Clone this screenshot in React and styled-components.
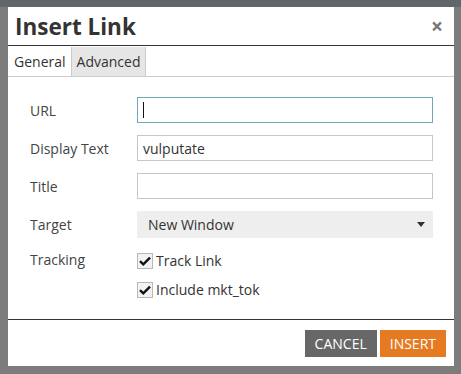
import React, { useState } from 'react';
import styled, { createGlobalStyle } from 'styled-components';

const GlobalStyle = createGlobalStyle`
  html, body {
    margin: 0;
    padding: 0;
  }
  body {
    font-family: "Open Sans", "Liberation Sans", sans-serif;
    background: linear-gradient(#5f676b 0, #5f676b 7px, #7c7c7c 7px);
    min-height: 374px;
    overflow: hidden;
  }
`;

const Backdrop = styled.div`
  padding: 7px 0 0 8px;
`;

const Dialog = styled.div`
  width: 446px;
  height: 359px;
  background: #fff;
  display: flex;
  flex-direction: column;
  box-sizing: border-box;
`;

const Header = styled.div`
  height: 39px;
  display: flex;
  align-items: center;
  justify-content: space-between;
  padding: 0 11px 0 7px;
  border-bottom: 1px solid #333;
  box-sizing: border-box;
`;

const Title = styled.h1`
  margin: 0;
  font-size: 22.5px;
  font-weight: 700;
  color: #333;
`;

const Close = styled.span`
  font-size: 21px;
  font-weight: 700;
  color: #777;
  line-height: 1;
  cursor: pointer;
`;

const TabBar = styled.div`
  display: flex;
  height: 30px;
  border-bottom: 1px solid #ccc;
  box-sizing: border-box;
  margin-top: 1px;
`;

const Tab = styled.div`
  display: flex;
  align-items: center;
  padding: ${(p) => (p.$first ? '0 5px 0 6px' : '0 5px')};
  font-size: 14px;
  color: #333;
  background: ${(p) => (p.$active ? '#fff' : '#e6e6e6')};
  border-left: ${(p) => (p.$active ? 'none' : '1px solid #ccc')};
  border-right: ${(p) => (p.$active ? 'none' : '1px solid #ccc')};
  cursor: pointer;
`;

const Body = styled.div`
  flex: 1;
  padding: 20px 21px 0 22px;
  display: flex;
  flex-direction: column;
  gap: 12px;
  border-bottom: 1px solid #333;
`;

const Row = styled.div`
  display: grid;
  grid-template-columns: 107px 1fr;
  align-items: ${(p) => (p.$top ? 'start' : 'center')};
`;

const Label = styled.label`
  font-size: 14px;
  color: #444;
`;

const Field = styled.div`
  position: relative;
`;

const TextCaret = styled.span`
  position: absolute;
  left: 6px;
  top: 5px;
  width: 1px;
  height: 16px;
  background: #111;
`;

const Input = styled.input`
  display: block;
  height: 26px;
  box-sizing: border-box;
  border: 1px solid ${(p) => (p.$focus ? '#6fa9b9' : '#c6c6c6')};
  padding: 0 5px;
  font-family: "Open Sans", "Liberation Sans", sans-serif;
  font-size: 14px;
  color: #333;
  outline: none;
  width: 100%;
`;

const Select = styled.div`
  height: 27px;
  background: #eeeeee;
  display: flex;
  align-items: center;
  justify-content: space-between;
  padding: 0 8px 0 11px;
  font-size: 14px;
  color: #333;
`;

const Caret = styled.span`
  width: 0;
  height: 0;
  border-left: 4px solid transparent;
  border-right: 4px solid transparent;
  border-top: 5px solid #333;
`;

const Checks = styled.div`
  display: flex;
  flex-direction: column;
  gap: 10px;
  padding-top: 1px;
`;

const CheckRow = styled.label`
  display: flex;
  align-items: center;
  gap: 3px;
  font-size: 14px;
  color: #333;
  cursor: pointer;
`;

const Box = styled.span`
  width: 16px;
  height: 16px;
  box-sizing: border-box;
  border: 1px solid #b8b8b8;
  background: #f2f2f2;
  display: flex;
  align-items: center;
  justify-content: center;
`;

const Footer = styled.div`
  height: 46px;
  display: flex;
  justify-content: flex-end;
  align-items: flex-start;
  gap: 3px;
  padding: 10px 8px 0 0;
  box-sizing: border-box;
`;

const Button = styled.button`
  height: 27px;
  border: none;
  padding: 0 10px;
  font-family: "Open Sans", "Liberation Sans", sans-serif;
  font-size: 14px;
  color: #fff;
  background: ${(p) => (p.$primary ? '#e67a22' : '#676767')};
  cursor: pointer;
`;

function Check({ checked, onToggle, children }) {
  return (
    <CheckRow onClick={onToggle}>
      <Box>
        {checked && (
          <svg width="12" height="10" viewBox="0 0 12 10">
            <path d="M1 5.2 L4.3 8.3 L11 1.6" fill="none" stroke="#111" strokeWidth="2.4" />
          </svg>
        )}
      </Box>
      {children}
    </CheckRow>
  );
}

export default function App() {
  const [track, setTrack] = useState(true);
  const [tok, setTok] = useState(true);
  const [url, setUrl] = useState('');
  const [display, setDisplay] = useState('vulputate');

  return (
    <>
      <GlobalStyle />
      <Backdrop>
        <Dialog>
          <Header>
            <Title>Insert Link</Title>
            <Close>×</Close>
          </Header>
          <TabBar>
            <Tab $active $first>General</Tab>
            <Tab>Advanced</Tab>
          </TabBar>
          <Body>
            <Row>
              <Label>URL</Label>
              <Field>
                <Input $focus value={url} onChange={(e) => setUrl(e.target.value)} />
                {!url && <TextCaret />}
              </Field>
            </Row>
            <Row>
              <Label>Display Text</Label>
              <Input value={display} onChange={(e) => setDisplay(e.target.value)} />
            </Row>
            <Row>
              <Label>Title</Label>
              <Input />
            </Row>
            <Row>
              <Label>Target</Label>
              <Select>
                New Window
                <Caret />
              </Select>
            </Row>
            <Row $top>
              <Label>Tracking</Label>
              <Checks>
                <Check checked={track} onToggle={() => setTrack(!track)}>Track Link</Check>
                <Check checked={tok} onToggle={() => setTok(!tok)}>Include mkt_tok</Check>
              </Checks>
            </Row>
          </Body>
          <Footer>
            <Button>CANCEL</Button>
            <Button $primary>INSERT</Button>
          </Footer>
        </Dialog>
      </Backdrop>
    </>
  );
}
